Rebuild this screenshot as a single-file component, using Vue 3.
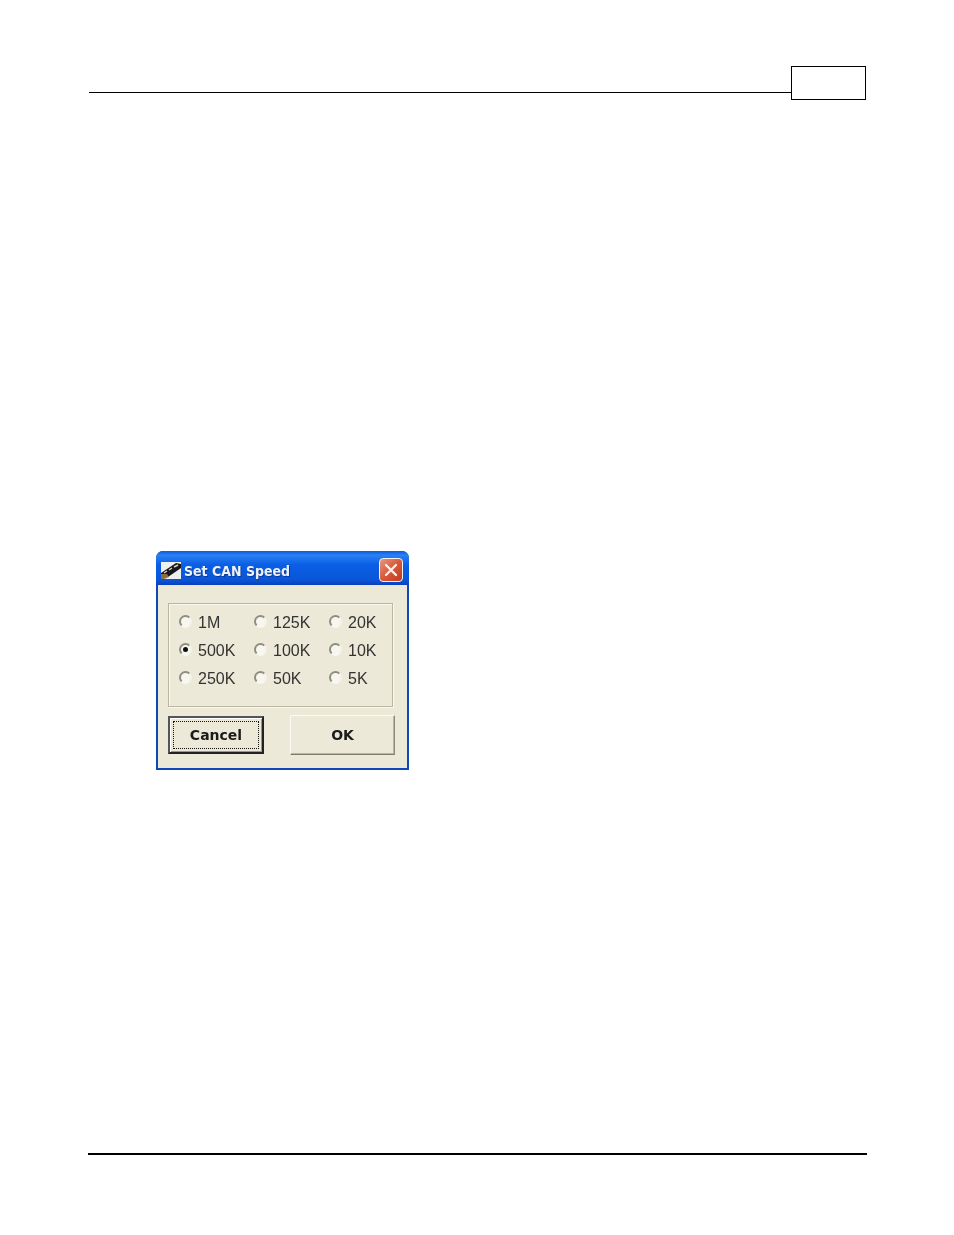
<template>
  <div class="page">
    <header class="pageHeader">
      <div class="headerLine"></div>
      <div class="pageNumber"></div>
    </header>

    <div class="dialog">
      <div class="titleBar">
        <svg class="appIcon" width="20" height="17" viewBox="0 0 20 17">
          <rect width="20" height="17" fill="#eef1f0" />
          <path d="M0 11 L15 1 L20 2 L20 6 L7 15 L0 15 Z" fill="#17171c" />
          <path d="M3 11 L6 9 M8 8 L11 6 M13 5 L17 3" stroke="#d8d4c4" stroke-width="1.4" />
          <path d="M0 12 L6 12 L8 15 L3 17 L0 17 Z" fill="#8c6f3e" />
        </svg>
        <span class="title">Set CAN Speed</span>
        <div class="closeButton">
          <svg width="14" height="14" viewBox="0 0 14 14">
            <path d="M2 2 L12 12 M12 2 L2 12" stroke="#fbeee8" stroke-width="2.4" stroke-linecap="round" />
          </svg>
        </div>
      </div>

      <div class="dialogBody">
        <div class="speedGroup">
          <div v-for="speed in speeds" :key="speed" class="speedOption">
            <span :class="['radio', { checked: speed === selected }]"></span>
            <span class="speedLabel">{{ speed }}</span>
          </div>
        </div>
        <div class="buttonRow">
          <button class="cancelButton"><span class="focusRing">Cancel</span></button>
          <button class="okButton">OK</button>
        </div>
      </div>
    </div>

    <div class="footerLine"></div>
  </div>
</template>

<script setup>
const speeds = ['1M', '125K', '20K', '500K', '100K', '10K', '250K', '50K', '5K']
const selected = '500K'
</script>

<style>
html,
body {
  background: #fff;
}
</style>

<style scoped>
.page {
  width: 954px;
  height: 1235px;
  padding-top: 66px;
  box-sizing: border-box;
  overflow: hidden;
  font-family: "Liberation Sans", Arial, sans-serif;
}

.pageHeader {
  display: flex;
  align-items: flex-end;
  height: 34px;
  margin-left: 89px;
  width: 777px;
}

.headerLine {
  flex: 1;
  height: 1px;
  margin-bottom: 7px;
  background: #000;
}

.pageNumber {
  width: 75px;
  height: 34px;
  box-sizing: border-box;
  border: 1px solid #000;
}

.dialog {
  width: 253px;
  height: 219px;
  margin-top: 451px;
  margin-left: 156px;
  box-sizing: border-box;
  display: flex;
  flex-direction: column;
  background: #0f47b8;
  border-radius: 7px 7px 0 0;
  filter: blur(0.45px);
}

.titleBar {
  display: flex;
  align-items: center;
  height: 34px;
  box-sizing: border-box;
  padding: 4px 6px 0 5px;
  border-radius: 7px 7px 0 0;
  background: linear-gradient(to bottom, #0a5ae0 0%, #2b80f2 12%, #0a5fe6 40%, #0a55d8 85%, #0840b8 100%);
}

.appIcon {
  flex-shrink: 0;
  margin-right: 3px;
}

.title {
  flex: 1;
  padding-top: 1px;
  color: #eef3f8;
  font-family: "DejaVu Sans Condensed", "DejaVu Sans", sans-serif;
  font-stretch: condensed;
  font-size: 14px;
  font-weight: bold;
  text-shadow: 1px 1px 0 #0a3aa0;
}

.closeButton {
  width: 24px;
  height: 24px;
  box-sizing: border-box;
  display: flex;
  align-items: center;
  justify-content: center;
  border: 1px solid #f2f2f2;
  border-radius: 4px;
  background: linear-gradient(135deg, #e89a80 0%, #d8583a 50%, #c23a1e 100%);
}

.dialogBody {
  flex: 1;
  margin: 0 2px 2px;
  padding: 18px 10px 0;
  background: #ece9d8;
}

.speedGroup {
  width: 225px;
  height: 104px;
  box-sizing: border-box;
  display: grid;
  grid-template-columns: repeat(3, 75px);
  grid-auto-rows: 28px;
  padding: 5px 0 0 10px;
  border: 1px solid #b9b6a2;
  box-shadow: inset 1px 1px 0 #f8f7f0, 1px 1px 0 #f8f7f0;
}

.speedOption {
  display: flex;
  align-items: center;
  gap: 6px;
}

.radio {
  position: relative;
  width: 13px;
  height: 13px;
  margin-top: -3px;
  box-sizing: border-box;
  border-radius: 50%;
  border: 2px solid;
  border-color: #8f8d80 #f4f3ea #f8f7f0 #8f8d80;
  background: #f7f6ef;
}

.radio.checked::after {
  content: "";
  position: absolute;
  left: 2px;
  top: 2px;
  width: 5px;
  height: 5px;
  border-radius: 50%;
  background: #111;
}

.speedLabel {
  color: #333;
  font-size: 16px;
}

.buttonRow {
  display: flex;
  align-items: center;
  justify-content: space-between;
  width: 227px;
  margin-top: 8px;
}

button {
  padding: 0;
  font-family: "DejaVu Sans", sans-serif;
  font-size: 14px;
  font-weight: bold;
  color: #1a1a1a;
  background: #ece9d8;
}

.cancelButton {
  width: 96px;
  height: 38px;
  padding: 3px;
  border: 2px solid #222;
  border-top-color: #555;
  border-left-color: #555;
  box-shadow: inset 1px 1px 0 #fff, inset -1px -1px 0 #9a978a;
}

.focusRing {
  display: flex;
  align-items: center;
  justify-content: center;
  height: 100%;
  box-sizing: border-box;
  border: 1px dotted #111;
}

.okButton {
  width: 105px;
  height: 40px;
  border: 1px solid;
  border-color: #fbfaf4 #8d8b7c #7f7d6f #fbfaf4;
  box-shadow: inset -1px -1px 0 #b8b5a4;
}

.footerLine {
  width: 779px;
  height: 2px;
  margin-top: 383px;
  margin-left: 88px;
  background: #000;
}
</style>
